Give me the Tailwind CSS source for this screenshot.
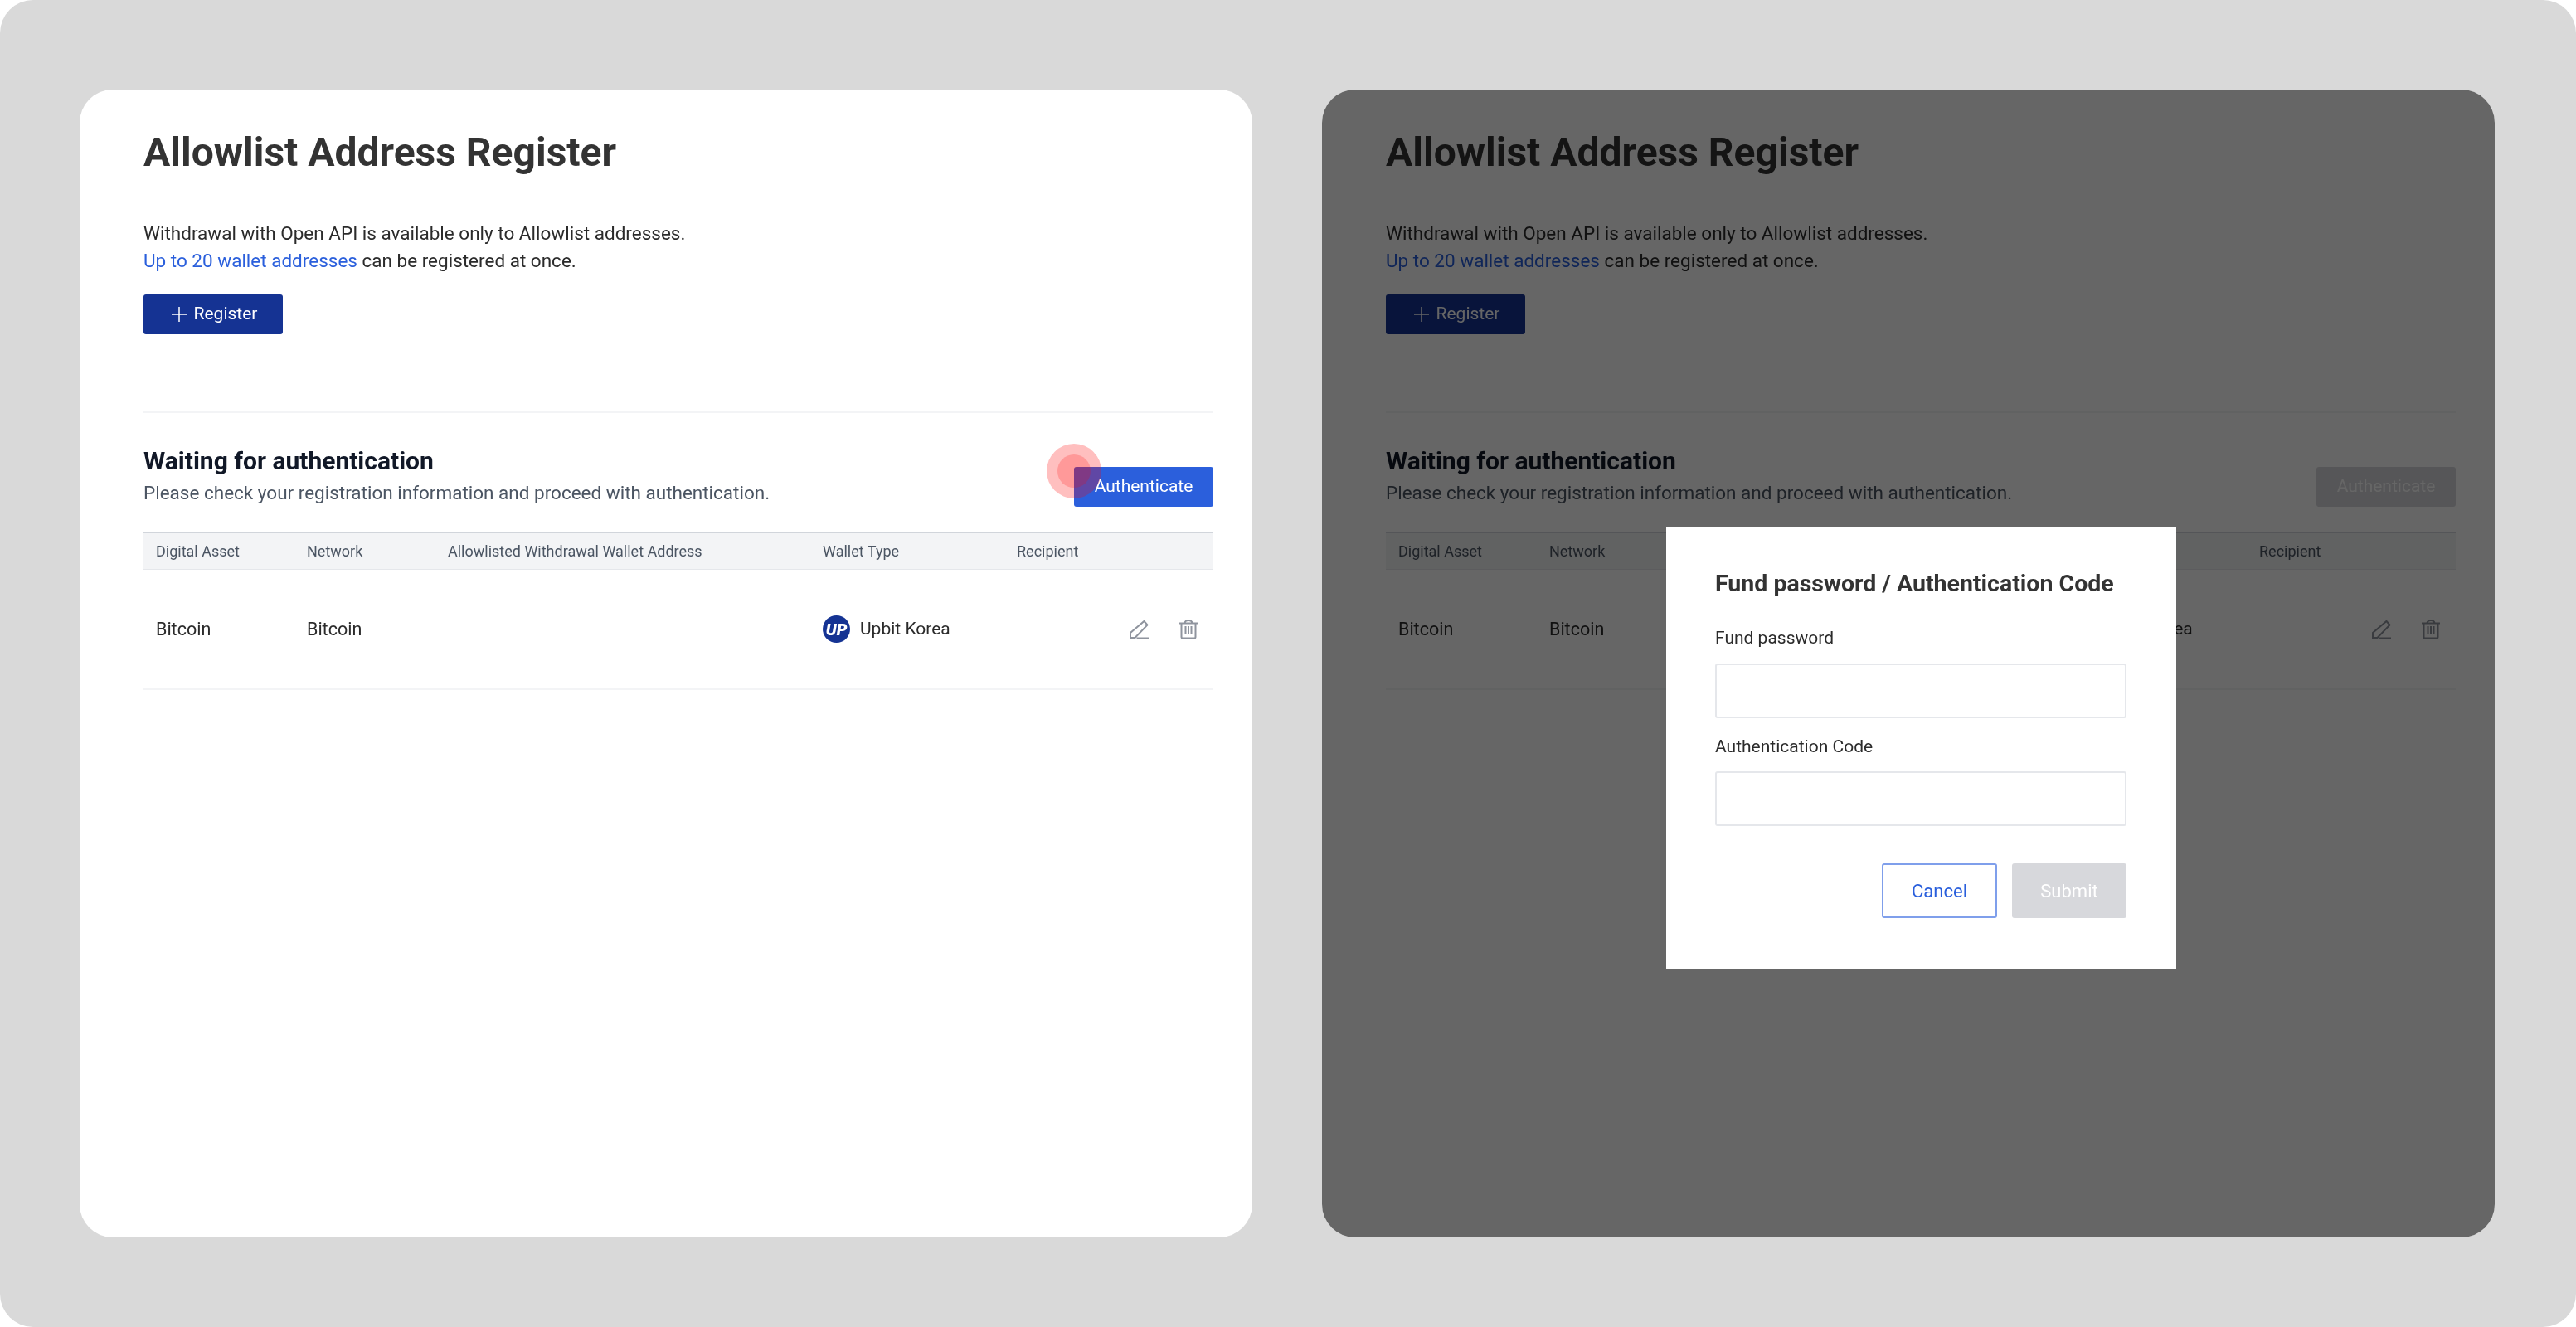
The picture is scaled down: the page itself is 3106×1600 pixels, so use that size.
<!DOCTYPE html>
<html><head><meta charset="utf-8"><script src="https://cdn.jsdelivr.net/npm/@tailwindcss/browser@4"></script></head>
<body class="m-0">
<div class="w-[3106px] h-[1600px] bg-[#d9d9d9] flex gap-[84px] pt-[108px] pl-[96px] font-['Roboto',sans-serif] text-[#2b2b2b] overflow-hidden rounded-[40px] antialiased will-change-transform">

<section class="relative w-[1414px] h-[1384px] bg-white rounded-[40px] overflow-hidden pl-[77px] pr-[47px] pt-[43px]">
  <h1 class="text-[48px] leading-[66px] font-bold text-[#333333]">Allowlist Address Register</h1>
  <div class="mt-[48px] text-[22.5px] leading-[33px]">
    <p>Withdrawal with Open API is available only to Allowlist addresses.</p>
    <p><span class="text-[#2a5fdc]">Up to 20 wallet addresses</span> can be registered at once.</p>
  </div>
  <button class="mt-[24px] w-[168px] h-[48px] pl-[3px] rounded-[3px] bg-[#153393] text-white text-[21px] flex items-center justify-center gap-[9px]">
    <svg width="18" height="18" viewBox="0 0 18 18" fill="none" stroke="white" stroke-width="1.5"><path d="M9 0V18M0 9H18"/></svg>Register</button>
  <div class="mt-[93px] border-t-2 border-[#f3f4f6] pt-[40px] flex justify-between h-[145px]">
    <div>
      <h2 class="text-[30px] leading-[36px] font-bold text-[#111827]">Waiting for authentication</h2>
      <p class="mt-[4px] text-[22.5px] leading-[32px] text-[#4b5563]">Please check your registration information and proceed with authentication.</p>
    </div>
    <button class="mt-[25px] w-[168px] h-[48px] rounded-[3px] bg-[#2b5fdc] text-white text-[21px]">Authenticate</button>
  </div>
  <div class="h-[46px] bg-[#f3f4f6] border-t-2 border-b border-t-[#d1d5db] border-b-[#e5e7eb] grid grid-cols-[182px_170px_452px_234px_1fr] pl-[15px] items-center text-[18px] text-[#4b5563]">
    <span>Digital Asset</span><span>Network</span><span>Allowlisted Withdrawal Wallet Address</span><span>Wallet Type</span><span>Recipient</span>
  </div>
  <div class="relative h-[145px] pt-[1px] border-b-2 border-[#f3f4f6] grid grid-cols-[182px_170px_452px_1fr] pl-[15px] items-center text-[21.5px]">
    <span>Bitcoin</span><span>Bitcoin</span><span></span>
    <span class="flex items-center gap-[12px] text-[21px] -mt-[1px]">
      <span class="w-[33px] h-[33px] rounded-full bg-[#153393] text-white text-[20px] leading-none font-black italic flex items-center justify-center">UP</span>Upbit Korea
    </span>
    <span class="absolute right-[19px] top-[60px] flex gap-[37px]">
      <svg width="24" height="24" viewBox="0 0 24 24" fill="none" stroke="#8f949e" stroke-width="2"><path d="M2 22V16L18.500 2L22.500 6.500L7.500 22H2ZM9.500 22.500H24"/></svg>
      <svg width="22" height="24" viewBox="0 0 22 24" fill="none" stroke="#8f949e" stroke-width="2"><path d="M0 4.500H22M2.500 5V21Q2.500 22.500 4 22.500H18Q19.500 22.500 19.500 21V5M6.500 4C7 1.500 9 1 11 1S15 1.500 15.500 4M7.500 8V18M11 8V18M14.500 8V18"/></svg>
    </span>
  </div>
  <div class="absolute left-[1166px] top-[427px] w-[66px] h-[66px] rounded-full bg-[#ff0000]/25 flex items-center justify-center">
    <div class="w-[40px] h-[40px] rounded-full bg-[#ff0000]/20"></div>
  </div>
</section>

<section class="relative w-[1414px] h-[1384px] bg-white rounded-[40px] overflow-hidden pl-[77px] pr-[47px] pt-[43px]">
  <h1 class="text-[48px] leading-[66px] font-bold text-[#333333]">Allowlist Address Register</h1>
  <div class="mt-[48px] text-[22.5px] leading-[33px]">
    <p>Withdrawal with Open API is available only to Allowlist addresses.</p>
    <p><span class="text-[#2a5fdc]">Up to 20 wallet addresses</span> can be registered at once.</p>
  </div>
  <button class="mt-[24px] w-[168px] h-[48px] pl-[3px] rounded-[3px] bg-[#153393] text-white text-[21px] flex items-center justify-center gap-[9px]">
    <svg width="18" height="18" viewBox="0 0 18 18" fill="none" stroke="white" stroke-width="1.5"><path d="M9 0V18M0 9H18"/></svg>Register</button>
  <div class="mt-[93px] border-t-2 border-[#f3f4f6] pt-[40px] flex justify-between h-[145px]">
    <div>
      <h2 class="text-[30px] leading-[36px] font-bold text-[#111827]">Waiting for authentication</h2>
      <p class="mt-[4px] text-[22.5px] leading-[32px] text-[#4b5563]">Please check your registration information and proceed with authentication.</p>
    </div>
    <button class="mt-[25px] w-[168px] h-[48px] rounded-[3px] bg-[#d7d8dc] text-white text-[21px]">Authenticate</button>
  </div>
  <div class="h-[46px] bg-[#f3f4f6] border-t-2 border-b border-t-[#d1d5db] border-b-[#e5e7eb] grid grid-cols-[182px_170px_452px_234px_1fr] pl-[15px] items-center text-[18px] text-[#4b5563]">
    <span>Digital Asset</span><span>Network</span><span>Allowlisted Withdrawal Wallet Address</span><span>Wallet Type</span><span>Recipient</span>
  </div>
  <div class="relative h-[145px] pt-[1px] border-b-2 border-[#f3f4f6] grid grid-cols-[182px_170px_452px_1fr] pl-[15px] items-center text-[21.5px]">
    <span>Bitcoin</span><span>Bitcoin</span><span></span>
    <span class="flex items-center gap-[12px] text-[21px] -mt-[1px]">
      <span class="w-[33px] h-[33px] rounded-full bg-[#153393] text-white text-[20px] leading-none font-black italic flex items-center justify-center">UP</span>Upbit Korea
    </span>
    <span class="absolute right-[19px] top-[60px] flex gap-[37px]">
      <svg width="24" height="24" viewBox="0 0 24 24" fill="none" stroke="#8f949e" stroke-width="2"><path d="M2 22V16L18.500 2L22.500 6.500L7.500 22H2ZM9.500 22.500H24"/></svg>
      <svg width="22" height="24" viewBox="0 0 22 24" fill="none" stroke="#8f949e" stroke-width="2"><path d="M0 4.500H22M2.500 5V21Q2.500 22.500 4 22.500H18Q19.500 22.500 19.500 21V5M6.500 4C7 1.500 9 1 11 1S15 1.500 15.500 4M7.500 8V18M11 8V18M14.500 8V18"/></svg>
    </span>
  </div>
  <div class="absolute inset-0 bg-black/60"></div>
  <div class="absolute left-[415px] top-[528px] w-[615px] h-[532px] bg-white pt-[50px] pl-[59px] pr-[60px]">
    <h3 class="text-[28.5px] leading-[36px] font-bold text-[#333333]">Fund password / Authentication Code</h3>
    <label class="block mt-[33px] text-[21px] leading-[28px]">Fund password</label>
    <div class="mt-[17px] h-[66px] border-2 border-[#e5e7eb] rounded-[3px]"></div>
    <label class="block mt-[20px] text-[21px] leading-[28px]">Authentication Code</label>
    <div class="mt-[16px] h-[66px] border-2 border-[#e5e7eb] rounded-[3px]"></div>
    <div class="mt-[45px] flex justify-end gap-[18px]">
      <button class="w-[139px] h-[66px] rounded-[3px] border-2 border-[#7f9feb] bg-white text-[#2a5fdc] text-[22px]">Cancel</button>
      <button class="w-[138px] h-[66px] rounded-[3px] bg-[#d7d8dc] text-white text-[22px]">Submit</button>
    </div>
  </div>
</section>
</div>
</body></html>
